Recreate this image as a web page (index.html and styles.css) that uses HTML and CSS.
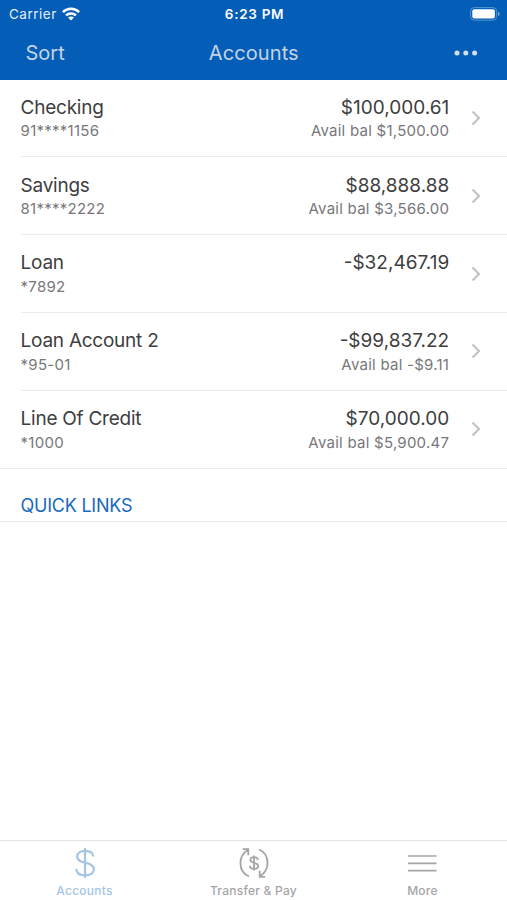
FILE: index.html
```html
<!DOCTYPE html>
<html lang="en">
<head>
<meta charset="utf-8">
<title>Accounts</title>
<link rel="stylesheet" href="styles.css">
</head>
<body>
<header class="header">
  <div class="status">
    <div class="carrier"><span>Carrier</span>
      <svg width="18" height="14" viewBox="0 0 18 14" fill="none" stroke="#fff" stroke-width="2.5"><path d="M.9 5.1C5.5.6 12.5.6 17.1 5.1M4 8.4c2.8-2.6 7.2-2.6 10 0"/><path d="M9 13.5 6 10.6c1.7-1.5 4.3-1.5 6 0z" fill="#fff" stroke="none"/></svg>
    </div>
    <time class="time">6:23 PM</time>
    <svg class="battery" width="30" height="14" viewBox="0 0 30 14"><rect x=".6" y=".6" width="26" height="12.6" rx="3.6" fill="none" stroke="#5794d2"/><rect x="2.3" y="2.3" width="22.6" height="9.2" rx="2" fill="#fff"/><path d="M28 4.7q1.7.7 1.7 2.2T28 9.1z" fill="#75a9dc"/></svg>
  </div>
  <nav class="navbar">
    <span class="sort">Sort</span>
    <h1 class="title">Accounts</h1>
    <svg class="dots" width="24" height="6" viewBox="0 0 24 6" fill="#d2dfee"><circle cx="3" cy="3" r="2.5"/><circle cx="11.8" cy="3" r="2.5"/><circle cx="20.6" cy="3" r="2.5"/></svg>
  </nav>
</header>
<main class="content">
  <ul class="accounts">
    <li class="account"><div class="names"><div class="name">Checking</div><div class="sub">91****1156</div></div><div class="amounts"><div class="amount">$100,000.61</div><div class="sub">Avail bal $1,500.00</div></div><svg class="chevron" viewBox="0 0 10 16"><path d="m1.5 1.5 6.5 6.5-6.5 6.5"/></svg></li>
    <li class="account"><div class="names"><div class="name">Savings</div><div class="sub">81****2222</div></div><div class="amounts"><div class="amount">$88,888.88</div><div class="sub">Avail bal $3,566.00</div></div><svg class="chevron" viewBox="0 0 10 16"><path d="m1.5 1.5 6.5 6.5-6.5 6.5"/></svg></li>
    <li class="account"><div class="names"><div class="name">Loan</div><div class="sub">*7892</div></div><div class="amounts"><div class="amount">-$32,467.19</div></div><svg class="chevron" viewBox="0 0 10 16"><path d="m1.5 1.5 6.5 6.5-6.5 6.5"/></svg></li>
    <li class="account"><div class="names"><div class="name">Loan Account 2</div><div class="sub">*95-01</div></div><div class="amounts"><div class="amount">-$99,837.22</div><div class="sub">Avail bal -$9.11</div></div><svg class="chevron" viewBox="0 0 10 16"><path d="m1.5 1.5 6.5 6.5-6.5 6.5"/></svg></li>
    <li class="account"><div class="names"><div class="name">Line Of Credit</div><div class="sub">*1000</div></div><div class="amounts"><div class="amount">$70,000.00</div><div class="sub">Avail bal $5,900.47</div></div><svg class="chevron" viewBox="0 0 10 16"><path d="m1.5 1.5 6.5 6.5-6.5 6.5"/></svg></li>
  </ul>
  <h2 class="quick"><span>QUICK LINKS</span></h2>
</main>
<nav class="tabs">
  <div class="tab active">
    <svg width="32" height="32" viewBox="0 0 32 32" fill="none" stroke="currentColor" stroke-width="2.2"><path d="M16 1v30M24.4 9.5c-.4-3.6-3.6-5.6-8.2-5.6-4.8 0-8 2.2-8 5.7 0 4.2 3.8 5.2 8 6.1 4.8 1 8.7 2.3 8.7 6.6 0 3.8-3.5 6-8.6 6-5.3 0-8.8-2.3-9.1-6.5"/></svg>
    <span>Accounts</span>
  </div>
  <div class="tab">
    <svg width="32" height="32" viewBox="0 0 32 32" fill="none" stroke="currentColor" stroke-width="1.8"><path d="M11 29.5C.2 25-.5 9.2 9.8 3M4.8 2.2h5.5v6M21 2.5c10.8 4.5 11.5 20.3 1.2 26.5M27.2 29.8h-5.5v-6M16 8.5v15M19.9 12.8c-.2-1.8-1.7-2.7-3.8-2.7-2.2 0-3.8 1-3.8 2.7 0 2 1.8 2.5 3.8 3 2.2.5 4.1 1.1 4.1 3.2 0 1.8-1.7 2.9-4.1 2.9-2.5 0-4.2-1.1-4.3-3.1"/></svg>
    <span>Transfer &amp; Pay</span>
  </div>
  <div class="tab">
    <svg width="32" height="32" viewBox="0 0 32 32" stroke="currentColor" stroke-width="1.7"><path d="M1 9h28.5M1 16.4h28.5M1 23.7h28.5"/></svg>
    <span>More</span>
  </div>
</nav>
</body>
</html>
```
FILE: styles.css
```css
* { box-sizing: border-box; }
body { margin: 0; height: 900px; display: flex; flex-direction: column; background: #fff; color: #3e3e40; font-family: Inter, "Liberation Sans", sans-serif; overflow: hidden; }
h1, h2, ul { margin: 0; padding: 0; font-weight: 400; }
svg { display: block; flex: none; }
.header { height: 80px; background: #045db7; }
.status { height: 27px; padding: 0 7px 0 9px; display: grid; grid-template-columns: 1fr auto 1fr; align-items: center; color: #fff; font-size: 13px; }
.carrier { display: flex; align-items: center; gap: 5px; color: #e5eef8; font-size: 13.5px; letter-spacing: .5px; }
.time { font-size: 13.5px; font-weight: 600; letter-spacing: .7px; }
.battery { justify-self: end; }
.navbar { height: 52px; padding: 0 29px 0 25.5px; display: grid; grid-template-columns: 1fr auto 1fr; align-items: center; color: #c6d4e5; font-size: 20px; }
.title { font-size: 20px; letter-spacing: .1px; padding-left: 4px; }
.dots { justify-self: end; }
.content { flex: 1; }
.accounts { list-style: none; margin-top: -.7px; }
.account { height: 77.9px; margin-left: 20.6px; padding: 15.3px 26px 0 0; display: flex; border-bottom: 1px solid #ebebed; }
.account:last-child { margin-left: 0; padding-left: 20.6px; }
.names { flex: 1; }
.amounts { text-align: right; }
.name, .amount { font-size: 19px; line-height: 26px; }
.name { letter-spacing: -.25px; }
.sub { font-size: 15px; line-height: 22px; letter-spacing: .25px; color: #77777a; margin-top: -.6px; }
.chevron { width: 10px; height: 16px; margin: 15.2px 0 0 21.8px; fill: none; stroke: #c3c3c6; stroke-width: 2.2; }
.quick { height: 53.6px; padding: 24px 20.6px 0; border-bottom: 1px solid #ebebed; color: #176abd; font-size: 18px; line-height: 26px; letter-spacing: -.25px; }
.tabs { height: 60px; display: grid; grid-template-columns: repeat(3, 1fr); border-top: 1px solid #e3e3e5; }
.tab { display: flex; flex-direction: column; align-items: center; padding-top: 6px; color: #a5a5a7; font-size: 12px; line-height: 16px; font-weight: 500; letter-spacing: .25px; }
.tab span { margin-top: 4px; }
.active { color: #a5c5e3; }
```
